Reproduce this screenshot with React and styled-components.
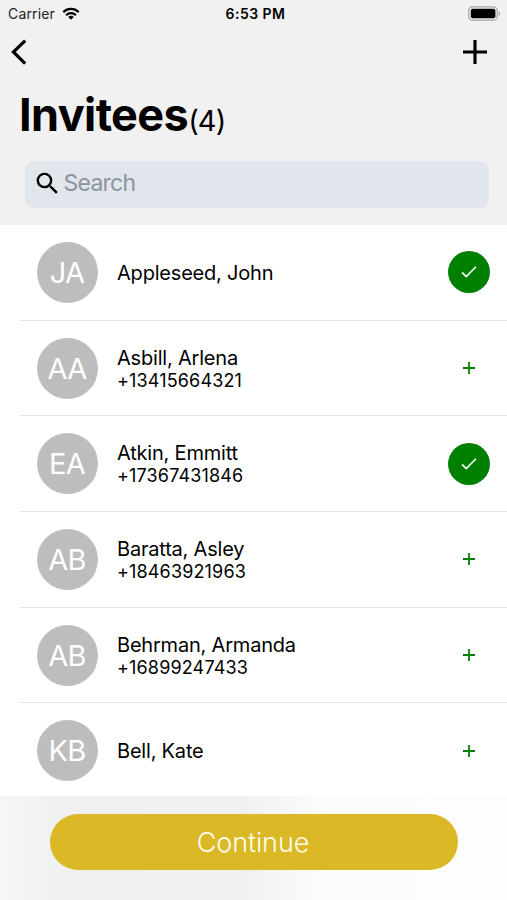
import React from 'react';
import styled, { createGlobalStyle } from 'styled-components';
import { MdSearch } from 'react-icons/md';

const GlobalStyle = createGlobalStyle`
  * {
    box-sizing: border-box;
  }

  body {
    margin: 0;
    background: white;
    color: black;
    font-family: Inter, 'Liberation Sans', sans-serif;
  }
`;

// Variables

const headerGrey = '#f1f1f1';
const green = '#008000';
const gold = '#dbb825';

const Screen = styled.div`
  display: flex;
  flex-direction: column;
  width: 507px;
  height: 900px;
  overflow: hidden;
`;

// ***************************************************************** //

// Header

const Header = styled.header`
  flex: none;
  height: 225px;
  background: ${headerGrey};
`;

const StatusBar = styled.div`
  display: grid;
  grid-template-columns: 1fr auto 1fr;
  align-items: center;
  height: 27px;
  padding: 0 6px 0 8px;
  font-size: 14px;
  line-height: 27px;
`;

const Carrier = styled.div`
  display: flex;
  align-items: center;
  gap: 7px;
  color: #222;
  letter-spacing: 0.15px;
`;

const Time = styled.div`
  padding-left: 2px;
  font-weight: 600;
  letter-spacing: 0.45px;
`;

const Battery = styled.svg`
  justify-self: end;
`;

const NavBar = styled.nav`
  display: flex;
  justify-content: space-between;
  height: 52px;
  padding: 11px 20px 0 9px;
`;

const IconButton = styled.button`
  display: flex;
  align-items: center;
  height: 28px;
  padding: 0;
  border: none;
  background: none;
  color: black;
`;

const Title = styled.h1`
  display: flex;
  align-items: baseline;
  height: 81px;
  margin: 0;
  padding: 8px 0 0 19px;
  font-size: 45px;
  font-weight: 700;
  line-height: 56px;
  letter-spacing: -0.6px;
`;

const Count = styled.span`
  font-size: 29px;
  font-weight: 400;
  letter-spacing: -0.9px;
`;

const SearchBox = styled.label`
  display: flex;
  align-items: center;
  height: 47px;
  margin: 1px 18px 0 25px;
  padding: 0 0 3px 8px;
  border-radius: 9px;
  background: #e1e6ed;
`;

const SearchInput = styled.input`
  flex: 1;
  padding: 0;
  margin-left: 1.5px;
  border: none;
  outline: none;
  background: none;
  font: 400 23px Inter, sans-serif;
  letter-spacing: -0.75px;

  &::placeholder {
    color: #8b939c;
    opacity: 1;
  }
`;

// ***************************************************************** //

// Contact list

const List = styled.ul`
  flex: none;
  height: 571px;
  margin: 0;
  padding: 0 0 0 20px;
  overflow: hidden;
  list-style: none;
`;

const Row = styled.li`
  display: flex;
  align-items: center;
  height: 95.7px;
  padding: 0 17px 0 16px;
  border-bottom: 1px solid #e4e4e4;
`;

const Avatar = styled.div`
  flex: none;
  width: 61px;
  height: 61px;
  margin-left: 0.5px;
  border-radius: 50%;
  background: #bdbdbd;
  color: white;
  font-size: 29px;
  font-weight: 400;
  line-height: 61px;
  letter-spacing: -0.8px;
  text-align: center;
`;

const Person = styled.div`
  flex: 1;
  padding-top: 1px;
  margin-left: 19.5px;
`;

const Name = styled.div`
  font-size: 20px;
  line-height: 24px;
  letter-spacing: -0.2px;
`;

const Phone = styled.div`
  font-size: 18px;
  line-height: 22px;
  letter-spacing: 0.15px;
`;

const Toggle = styled.button`
  display: flex;
  align-items: center;
  justify-content: center;
  width: 42px;
  height: 42px;
  padding: 0;
  border: none;
  border-radius: 50%;
  background: ${({ $selected }) => ($selected ? green : 'none')};
  color: ${({ $selected }) => ($selected ? 'white' : green)};
`;

// ***************************************************************** //

// Footer

const Footer = styled.footer`
  flex: 1;
  padding: 18px 49px 0 50px;
  background: linear-gradient(
    90deg,
    #f6f6f6 0,
    #f1f1f1 50px,
    #f0f0f0 235px,
    #fcfcfc 325px,
    #fcfdfc 507px
  );
`;

const ContinueButton = styled.button`
  display: block;
  width: 100%;
  height: 55.5px;
  padding: 2px 2px 0 0;
  border: none;
  border-radius: 28px;
  background: ${gold};
  color: #fffdf0;
  font: 300 27px Inter, sans-serif;
  letter-spacing: -0.1px;
`;

// ***************************************************************** //

const contacts = [
  { initials: 'JA', name: 'Appleseed, John', selected: true },
  { initials: 'AA', name: 'Asbill, Arlena', phone: '+13415664321' },
  { initials: 'EA', name: 'Atkin, Emmitt', phone: '+17367431846', selected: true },
  { initials: 'AB', name: 'Baratta, Asley', phone: '+18463921963' },
  { initials: 'AB', name: 'Behrman, Armanda', phone: '+16899247433' },
  { initials: 'KB', name: 'Bell, Kate' },
];

const WifiIcon = () => (
  <svg width="18" height="14" viewBox="0 0 18 14" fill="none" stroke="black" strokeWidth="2.2">
    <path d="M1.3 5.1a11 11 0 0 1 15.4 0" />
    <path d="M4.1 8.2a7 7 0 0 1 9.8 0" />
    <path d="M9 12.8 6.2 10a4 4 0 0 1 5.6 0z" fill="black" stroke="none" />
  </svg>
);

const BatteryIcon = () => (
  <Battery width="33" height="15" viewBox="0 0 33 15">
    <rect x="0.8" y="0.8" width="28.4" height="13.4" rx="3.8" fill="none" stroke="#a5a5a5" strokeWidth="1.2" />
    <rect x="2.8" y="2.8" width="24.6" height="9.4" rx="2" />
    <path d="M30.6 5.2c1.8.8 1.8 3.8 0 4.6z" fill="#999" />
  </Battery>
);

const CheckIcon = () => (
  <svg width="18" height="14" viewBox="0 0 18 14" fill="none" stroke="currentColor" strokeWidth="1.6">
    <path d="m2 7.4 4.2 4.2L16 1.8" />
  </svg>
);

const PlusIcon = ({ size, stroke }) => (
  <svg width={size} height={size} viewBox={`0 0 ${size} ${size}`} stroke="currentColor" strokeWidth={stroke}>
    <path d={`M${size / 2} 0v${size}M0 ${size / 2}h${size}`} />
  </svg>
);

const Contact = ({ initials, name, phone, selected }) => (
  <Row>
    <Avatar>{initials}</Avatar>
    <Person>
      <Name>{name}</Name>
      {phone && <Phone>{phone}</Phone>}
    </Person>
    <Toggle $selected={selected} aria-label={name}>
      {selected ? <CheckIcon /> : <PlusIcon size={12} stroke={1.8} />}
    </Toggle>
  </Row>
);

function App() {
  return (
    <Screen>
      <GlobalStyle />
      <Header>
        <StatusBar>
          <Carrier>
            Carrier
            <WifiIcon />
          </Carrier>
          <Time>6:53 PM</Time>
          <BatteryIcon />
        </StatusBar>
        <NavBar>
          <IconButton aria-label="Back">
            <svg width="18" height="28" viewBox="0 0 18 28" fill="none" stroke="black" strokeWidth="3.2">
              <path d="M16.2 2.6 4.4 14l11.8 11.6" />
            </svg>
          </IconButton>
          <IconButton aria-label="Add">
            <PlusIcon size={24} stroke={3.2} />
          </IconButton>
        </NavBar>
        <Title>
          Invitees<Count>(4)</Count>
        </Title>
        <SearchBox>
          <MdSearch size={29} />
          <SearchInput placeholder="Search" />
        </SearchBox>
      </Header>
      <List>
        {contacts.map((contact) => (
          <Contact key={contact.name} {...contact} />
        ))}
      </List>
      <Footer>
        <ContinueButton>Continue</ContinueButton>
      </Footer>
    </Screen>
  );
}

export default App;
